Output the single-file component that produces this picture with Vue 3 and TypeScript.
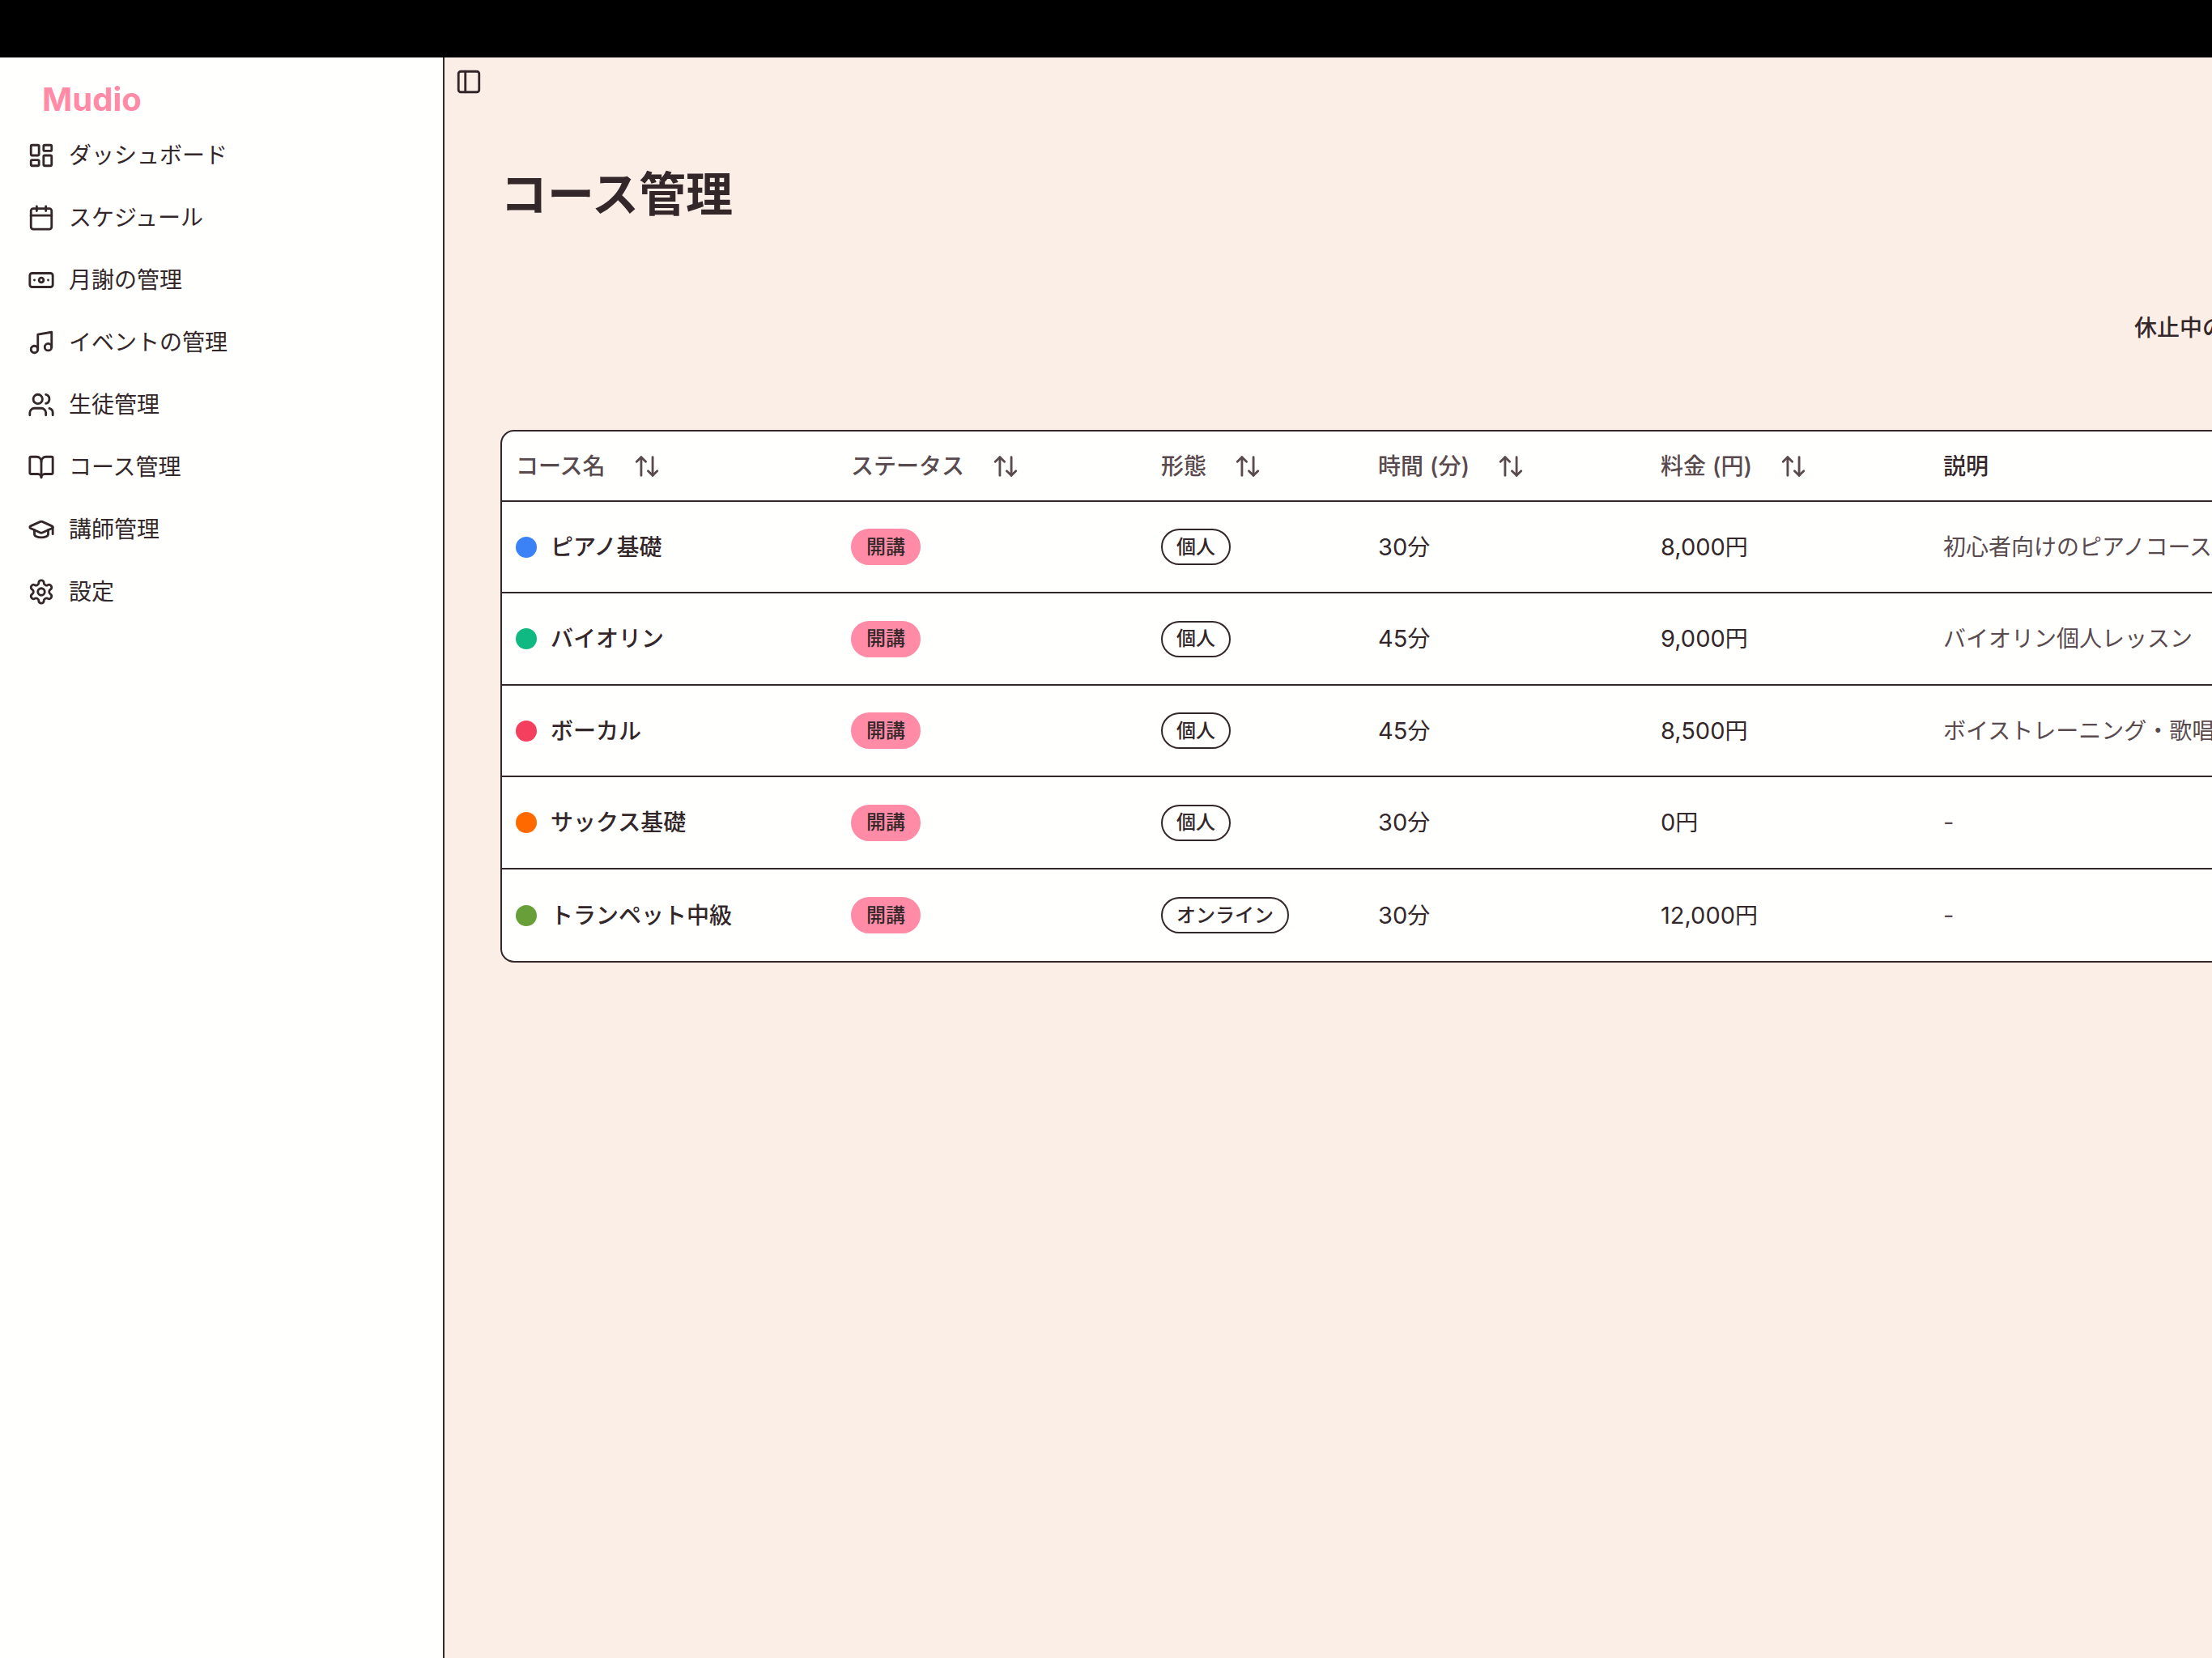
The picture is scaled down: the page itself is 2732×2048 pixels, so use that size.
<script setup lang="ts">
interface NavItem {
  label: string
  icon: string
}

interface Course {
  name: string
  color: string
  status: string
  form: string
  minutes: string
  fee: string
  description: string
}

interface Column {
  label: string
  unit?: string
  width?: string
  sortable: boolean
}

const navItems: NavItem[] = [
  {
    label: 'ダッシュボード',
    icon: '<rect width="7" height="9" x="3" y="3" rx="1"/><rect width="7" height="5" x="14" y="3" rx="1"/><rect width="7" height="9" x="14" y="12" rx="1"/><rect width="7" height="5" x="3" y="16" rx="1"/>',
  },
  {
    label: 'スケジュール',
    icon: '<path d="M8 2v4"/><path d="M16 2v4"/><rect width="18" height="18" x="3" y="4" rx="2"/><path d="M3 10h18"/>',
  },
  {
    label: '月謝の管理',
    icon: '<rect width="20" height="12" x="2" y="6" rx="2"/><circle cx="12" cy="12" r="2"/><path d="M6 12h.01M18 12h.01"/>',
  },
  {
    label: 'イベントの管理',
    icon: '<path d="M9 18V5l12-2v13"/><circle cx="6" cy="18" r="3"/><circle cx="18" cy="16" r="3"/>',
  },
  {
    label: '生徒管理',
    icon: '<path d="M16 21v-2a4 4 0 0 0-4-4H6a4 4 0 0 0-4 4v2"/><circle cx="9" cy="7" r="4"/><path d="M22 21v-2a4 4 0 0 0-3-3.87"/><path d="M16 3.13a4 4 0 0 1 0 7.75"/>',
  },
  {
    label: 'コース管理',
    icon: '<path d="M12 7v14"/><path d="M3 18a1 1 0 0 1-1-1V4a1 1 0 0 1 1-1h5a4 4 0 0 1 4 4 4 4 0 0 1 4-4h5a1 1 0 0 1 1 1v13a1 1 0 0 1-1 1h-6a3 3 0 0 0-3 3 3 3 0 0 0-3-3z"/>',
  },
  {
    label: '講師管理',
    icon: '<path d="M21.42 10.922a1 1 0 0 0-.019-1.838L12.83 5.18a2 2 0 0 0-1.66 0L2.6 9.08a1 1 0 0 0 0 1.832l8.57 3.908a2 2 0 0 0 1.66 0z"/><path d="M22 10v6"/><path d="M6 12.5V16a6 3 0 0 0 12 0v-3.5"/>',
  },
  {
    label: '設定',
    icon: '<path d="M12.22 2h-.44a2 2 0 0 0-2 2v.18a2 2 0 0 1-1 1.73l-.43.25a2 2 0 0 1-2 0l-.15-.08a2 2 0 0 0-2.73.73l-.22.38a2 2 0 0 0 .73 2.73l.15.1a2 2 0 0 1 1 1.72v.51a2 2 0 0 1-1 1.74l-.15.09a2 2 0 0 0-.73 2.73l.22.38a2 2 0 0 0 2.73.73l.15-.08a2 2 0 0 1 2 0l.43.25a2 2 0 0 1 1 1.73V20a2 2 0 0 0 2 2h.44a2 2 0 0 0 2-2v-.18a2 2 0 0 1 1-1.73l.43-.25a2 2 0 0 1 2 0l.15.08a2 2 0 0 0 2.73-.73l.22-.39a2 2 0 0 0-.73-2.73l-.15-.08a2 2 0 0 1-1-1.74v-.5a2 2 0 0 1 1-1.74l.15-.09a2 2 0 0 0 .73-2.73l-.22-.38a2 2 0 0 0-2.73-.73l-.15.08a2 2 0 0 1-2 0l-.43-.25a2 2 0 0 1-1-1.73V4a2 2 0 0 0-2-2z"/><circle cx="12" cy="12" r="3"/>',
  },
]

const columns: Column[] = [
  { label: 'コース名', width: '414px', sortable: true },
  { label: 'ステータス', width: '383px', sortable: true },
  { label: '形態', width: '268px', sortable: true },
  { label: '時間', unit: '分', width: '349px', sortable: true },
  { label: '料金', unit: '円', width: '349px', sortable: true },
  { label: '説明', sortable: false },
]

const courses: Course[] = [
  { name: 'ピアノ基礎', color: '#3b82f6', status: '開講', form: '個人', minutes: '30', fee: '8,000', description: '初心者向けのピアノコース' },
  { name: 'バイオリン', color: '#10b981', status: '開講', form: '個人', minutes: '45', fee: '9,000', description: 'バイオリン個人レッスン' },
  { name: 'ボーカル', color: '#f43f5e', status: '開講', form: '個人', minutes: '45', fee: '8,500', description: 'ボイストレーニング・歌唱' },
  { name: 'サックス基礎', color: '#ff6900', status: '開講', form: '個人', minutes: '30', fee: '0', description: '-' },
  { name: 'トランペット中級', color: '#689f38', status: '開講', form: 'オンライン', minutes: '30', fee: '12,000', description: '-' },
]
</script>

<template>
  <div class="app">
    <div class="status-bar"></div>
    <div class="shell">
      <aside class="sidebar">
        <a class="brand" href="#">Mudio</a>
        <nav class="nav">
          <a v-for="item in navItems" :key="item.label" class="nav-link" href="#">
            <svg class="icon" viewBox="0 0 24 24" aria-hidden="true" v-html="item.icon"></svg>
            <span>{{ item.label }}</span>
          </a>
        </nav>
      </aside>

      <main class="main">
        <button class="toggle" type="button" aria-label="Toggle Sidebar">
          <svg class="icon" viewBox="0 0 24 24" aria-hidden="true">
            <rect width="18" height="18" x="3" y="3" rx="2" />
            <path d="M9 3v18" />
          </svg>
        </button>
        <div class="content">
          <h1 class="title">コース管理</h1>
          <div class="toolbar"><span>休止中の</span></div>
          <div class="card">
            <table class="table">
              <colgroup>
                <col v-for="col in columns" :key="col.label" :style="{ width: col.width }" />
              </colgroup>
              <thead>
                <tr>
                  <th v-for="col in columns" :key="col.label" scope="col">
                    <button v-if="col.sortable" class="sort" type="button">
                      <span>{{ col.label }}<template v-if="col.unit"><span class="latin">&nbsp;(</span>{{ col.unit }}<span class="latin">)</span></template></span>
                      <svg class="icon" viewBox="0 0 24 24" aria-hidden="true">
                        <path d="m21 16-4 4-4-4" />
                        <path d="M17 20V4" />
                        <path d="m3 8 4-4 4 4" />
                        <path d="M7 4v16" />
                      </svg>
                    </button>
                    <template v-else>{{ col.label }}</template>
                  </th>
                </tr>
              </thead>
              <tbody>
                <tr v-for="course in courses" :key="course.name">
                  <td>
                    <div class="name">
                      <span class="dot" :style="{ backgroundColor: course.color }"></span>
                      <span>{{ course.name }}</span>
                    </div>
                  </td>
                  <td><span class="badge filled">{{ course.status }}</span></td>
                  <td><span class="badge">{{ course.form }}</span></td>
                  <td><span class="latin">{{ course.minutes }}</span>分</td>
                  <td><span class="latin">{{ course.fee }}</span>円</td>
                  <td class="description">
                    <span :class="{ latin: course.description === '-' }">{{ course.description }}</span>
                  </td>
                </tr>
              </tbody>
            </table>
          </div>
        </div>
      </main>
    </div>
  </div>
</template>

<style>
body {
  margin: 0;
}
</style>

<style scoped>
.app {
  --ink: #33272a;
  --muted: #594a4e;
  --paper: #fffffe;
  --pink: #ff8ba7;
  display: flex;
  flex-direction: column;
  min-height: 100vh;
  overflow: hidden;
  color: var(--ink);
  background: #faeee7;
  font-family: Inter, "Noto Sans CJK JP", sans-serif;
  font-size: 28px;
  line-height: 40px;
}

.app *,
.app *::before {
  box-sizing: border-box;
}

button {
  padding: 0;
  border: 0;
  background: none;
  color: inherit;
  font: inherit;
  cursor: pointer;
}

a {
  color: inherit;
  text-decoration: none;
}

.status-bar {
  height: 71px;
  background: #000;
}

.shell {
  display: flex;
  flex: 1;
}

.sidebar {
  flex: none;
  width: 549px;
  padding: 22px 17px;
  border-right: 2px solid var(--ink);
  background: var(--paper);
}

.brand {
  display: block;
  padding: 0 35px;
  color: var(--pink);
  font-size: 40px;
  font-weight: 700;
  line-height: 60px;
}

.nav {
  display: flex;
  flex-direction: column;
}

.nav-link {
  display: flex;
  align-items: center;
  gap: 17px;
  height: 77px;
  padding: 0 17px;
}

.icon {
  flex: none;
  width: 34px;
  height: 34px;
  fill: none;
  stroke: currentColor;
  stroke-width: 2;
  stroke-linecap: round;
  stroke-linejoin: round;
}

.main {
  flex: 1;
  min-width: 0;
}

.toggle {
  display: flex;
  align-items: center;
  justify-content: center;
  width: 60px;
  height: 60px;
}

/* The list is wider than the window and runs off its right edge. */
.content {
  margin-right: -16px;
  padding: 69px 0 0 69px;
}

.title {
  margin: 0;
  font-size: 58px;
  font-weight: 700;
  line-height: 80px;
}

.toolbar {
  display: flex;
  justify-content: flex-end;
  padding: 105px 0 106px;
  font-weight: 500;
}

.card {
  overflow: hidden;
  border: 2px solid var(--ink);
  border-radius: 17px;
  background: var(--paper);
}

.table {
  width: 100%;
  table-layout: fixed;
  border-collapse: separate;
  border-spacing: 0;
  white-space: nowrap;
}

th,
td {
  padding: 0 17px;
  border-bottom: 2px solid var(--ink);
  text-align: left;
  vertical-align: middle;
}

th {
  height: 87px;
  font-weight: 500;
}

td {
  height: 113px;
}

tbody tr:nth-child(even) td {
  height: 114px;
}

tbody tr:last-child td {
  border-bottom: 0;
}

.sort {
  display: flex;
  align-items: center;
  gap: 34px;
  color: var(--muted);
}

.latin {
  font-size: 29px;
}

.name {
  display: flex;
  align-items: center;
  gap: 17px;
  font-weight: 500;
}

.dot {
  width: 26px;
  height: 26px;
  border-radius: 50%;
}

.badge {
  display: inline-flex;
  align-items: center;
  height: 45px;
  padding: 0 17px;
  border: 2px solid var(--ink);
  border-radius: 23px;
  font-size: 24px;
  font-weight: 500;
  vertical-align: middle;
}

.badge.filled {
  border-color: var(--pink);
  background: var(--pink);
}

.description {
  color: var(--muted);
}
</style>
